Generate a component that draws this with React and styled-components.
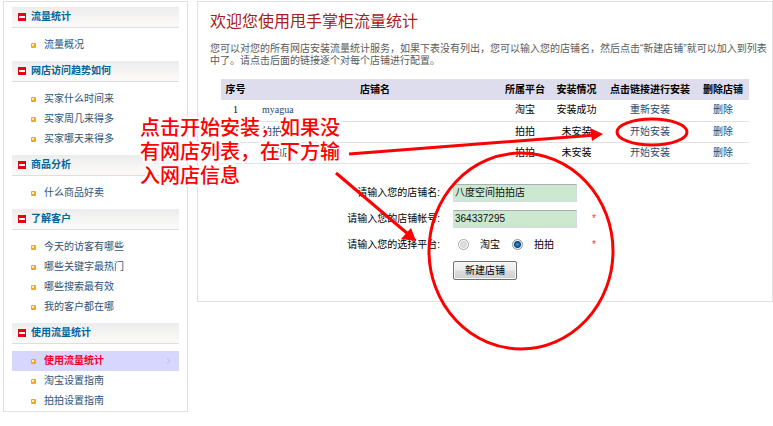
import React from 'react';
import styled, { createGlobalStyle } from 'styled-components';

const GlobalStyle = createGlobalStyle`
  * { box-sizing: border-box; }
  body {
    margin: 0;
    background: #fff;
    color: #000;
    font: 10px/20px "Liberation Sans", "Noto Sans CJK SC", sans-serif;
  }
  a { color: #1c4a73; text-decoration: none; }
  a:hover { text-decoration: underline; }
`;

const Page = styled.div`
  position: relative;
  display: flex;
  align-items: flex-start;
  gap: 9px;
  padding: 1px 0 15px 3px;
`;

const Sidebar = styled.nav`
  flex: 0 0 185px;
  padding: 5px 8px 0;
  border: 1px solid #e0e0e0;
`;

const SectionTitle = styled.h2`
  display: flex;
  align-items: center;
  gap: 4px;
  height: 21px;
  margin: 0;
  padding-left: 5px;
  border-bottom: 1px solid #dcdfe2;
  background: linear-gradient(#ececec, #faf9f8 80%);
  color: #03659b;
  font-size: 10px;
  font-weight: 700;
`;

const MenuList = styled.ul`
  margin: 0;
  padding: 7px 0 ${(p) => (p.$last ? 0 : 6)}px;
  list-style: none;
`;

const MenuItem = styled.li`
  display: flex;
  align-items: center;
  gap: 8px;
  height: 20px;
  padding: 0 8px 0 19px;
  background: ${(p) => (p.$active ? '#d6d6ff' : 'transparent')};
`;

const MenuLink = styled.a`
  flex: 1;
  && {
    color: ${(p) => (p.$active ? '#f5002a' : '#2c5478')};
  }
  font-weight: ${(p) => (p.$active ? 700 : 400)};
`;

const Main = styled.main`
  flex: 1;
  min-width: 0;
  padding: 8px 12px 17px;
  border: 1px solid #e0e0e0;
`;

const Title = styled.h1`
  margin: 0;
  color: #a81c22;
  font-size: 16px;
  font-weight: 400;
  line-height: 24px;
`;

const Intro = styled.p`
  margin: 9px -8px 0 0;
  color: #5a5a5a;
  line-height: 12px;
`;

const Content = styled.div`
  margin: 12px 11px 0;
`;

const ShopTable = styled.table`
  width: 100%;
  table-layout: fixed;
  border-collapse: collapse;
`;

const HeadCell = styled.th`
  width: ${(p) => p.$width || 'auto'};
  height: 21px;
  padding: 0;
  background: #dedded;
  font-weight: 700;
  white-space: nowrap;
`;

const Cell = styled.td`
  height: 21px;
  padding: 0 0 0 ${(p) => (p.$name ? 12 : 0)}px;
  border-bottom: 1px solid #e2e2e2;
  text-align: ${(p) => (p.$name ? 'left' : 'center')};
  font-family: "Liberation Serif", "Noto Sans CJK SC", serif;
`;

const Form = styled.form`
  display: grid;
  grid-template-columns: 219px 124px auto;
  grid-auto-rows: 26px;
  align-items: center;
  column-gap: 13px;
  margin-top: 16px;
`;

const Label = styled.label`
  grid-column: 1;
  text-align: right;
`;

const GroupLabel = styled.span`
  grid-column: 1;
  text-align: right;
`;

const TextInput = styled.input`
  width: 100%;
  height: 18px;
  padding: 0 1px;
  border: 1px solid #d5dbe3;
  border-top-color: #a9adb5;
  background: #cce8cf;
  color: #111;
  font: inherit;
`;

const Required = styled.span`
  color: #f33;
  padding-left: 2px;
`;

const Choices = styled.div`
  display: flex;
  gap: 12px;
  padding-left: 5px;
`;

const Choice = styled.label`
  display: flex;
  align-items: center;
  gap: 11px;
`;

const Radio = styled.input`
  appearance: none;
  width: 11px;
  height: 11px;
  margin: 0;
  border: 1px solid #a2a6aa;
  border-radius: 50%;
  background: radial-gradient(#e4e4e4, #d4d6d8 3px, #fff 4px);
  &:checked {
    border-color: #8796a5;
    background: radial-gradient(#3aa0dc 0, #0d3f77 3px, #e8eef4 4px);
  }
`;

const SubmitButton = styled.button`
  grid-column: 2;
  justify-self: start;
  width: 64px;
  height: 19px;
  padding: 0;
  border: 1px solid #707070;
  border-radius: 2px;
  background: linear-gradient(#f4f4f4, #ebebeb 49%, #dcdcdc 51%, #cfcfcf);
  box-shadow: inset 0 0 0 1px #f8f8f8;
  color: #000;
  font: inherit;
  line-height: 16px;
`;

const Marks = styled.svg`
  position: absolute;
  top: 0;
  left: 0;
  width: 773px;
  height: 426px;
  pointer-events: none;
`;

const Note = styled.p`
  position: absolute;
  top: 115px;
  left: 140px;
  width: 204px;
  margin: 0;
  color: #f00;
  font: 500 20px/24px "Noto Sans CJK SC", sans-serif;
  -webkit-text-stroke: 4px #fff;
  paint-order: stroke fill;
  pointer-events: none;
`;

const CollapseIcon = () => (
  <svg width="10" height="10" viewBox="0 0 10 10" aria-hidden="true">
    <rect x="1" y="1" width="8" height="8" fill="#e8000e" />
    <rect x="2" y="4" width="6" height="2" fill="#fff" />
  </svg>
);

const BulletIcon = () => (
  <svg width="5" height="5" viewBox="0 0 5 5" aria-hidden="true">
    <rect width="5" height="5" rx="1" fill="#f5a623" />
    <rect x="1" y="1" width="2" height="2" fill="#fff0c4" />
  </svg>
);

const ChevronIcon = () => (
  <svg width="5" height="6" viewBox="0 0 5 6" aria-hidden="true">
    <path d="M1 0.5 4 3 1 5.5" fill="none" stroke="#bfc0d4" />
  </svg>
);

const sections = [
  { title: '流量统计', items: ['流量概况'] },
  { title: '网店访问趋势如何', items: ['买家什么时间来', '买家周几来得多', '买家哪天来得多'] },
  { title: '商品分析', items: ['什么商品好卖'] },
  { title: '了解客户', items: ['今天的访客有哪些', '哪些关键字最热门', '哪些搜索最有效', '我的客户都在哪'] },
  { title: '使用流量统计', items: ['使用流量统计', '淘宝设置指南', '拍拍设置指南'], active: 0 },
];

const columns = [
  ['序号', '29px'],
  ['店铺名'],
  ['所属平台', '50px'],
  ['安装情况', '53px'],
  ['点击链接进行安装', '94px'],
  ['删除店铺', '52px'],
];

const shops = [
  { name: 'myagua', platform: '淘宝', status: '安装成功', action: '重新安装' },
  { name: '拍拍', platform: '拍拍', status: '未安装', action: '开始安装' },
  { name: '拍拍店', platform: '拍拍', status: '未安装', action: '开始安装' },
];

export default function App() {
  return (
    <>
      <GlobalStyle />
      <Page>
        <Sidebar>
          {sections.map((s, i) => (
            <React.Fragment key={s.title}>
              <SectionTitle><CollapseIcon />{s.title}</SectionTitle>
              <MenuList $last={i === sections.length - 1}>
                {s.items.map((item, j) => (
                  <MenuItem key={item} $active={s.active === j}>
                    <BulletIcon />
                    <MenuLink href="#" $active={s.active === j}>{item}</MenuLink>
                    {s.active === j && <ChevronIcon />}
                  </MenuItem>
                ))}
              </MenuList>
            </React.Fragment>
          ))}
        </Sidebar>
        <Main>
          <Title>欢迎您使用甩手掌柜流量统计</Title>
          <Intro>
            您可以对您的所有网店安装流量统计服务，如果下表没有列出，您可以输入您的店铺名，然后点击“新建店铺”就可以加入到列表中了。请点击后面的链接逐个对每个店铺进行配置。
          </Intro>
          <Content>
            <ShopTable>
              <thead>
                <tr>
                  {columns.map(([text, width]) => (
                    <HeadCell key={text} $width={width}>{text}</HeadCell>
                  ))}
                </tr>
              </thead>
              <tbody>
                {shops.map((shop, i) => (
                  <tr key={shop.name}>
                    <Cell>{i + 1}</Cell>
                    <Cell $name><a href="#">{shop.name}</a></Cell>
                    <Cell>{shop.platform}</Cell>
                    <Cell>{shop.status}</Cell>
                    <Cell><a href="#">{shop.action}</a></Cell>
                    <Cell><a href="#">删除</a></Cell>
                  </tr>
                ))}
              </tbody>
            </ShopTable>
            <Form onSubmit={(e) => e.preventDefault()}>
              <Label htmlFor="shop-name">请输入您的店铺名:</Label>
              <TextInput id="shop-name" defaultValue="八度空间拍拍店" />
              <span />
              <Label htmlFor="shop-account">请输入您的店铺帐号:</Label>
              <TextInput id="shop-account" defaultValue="364337295" />
              <Required>*</Required>
              <GroupLabel id="platform-label">请输入您的选择平台:</GroupLabel>
              <Choices role="radiogroup" aria-labelledby="platform-label">
                <Choice><Radio type="radio" name="platform" />淘宝</Choice>
                <Choice><Radio type="radio" name="platform" defaultChecked />拍拍</Choice>
              </Choices>
              <Required>*</Required>
              <SubmitButton type="submit">新建店铺</SubmitButton>
            </Form>
          </Content>
        </Main>
        <Note>点击开始安装，如果没有网店列表，在下方输入网店信息</Note>
        <Marks viewBox="0 0 773 426" aria-hidden="true">
          <g fill="none" stroke="#f00" strokeWidth="3">
            <ellipse cx="652" cy="132" rx="35" ry="13" />
            <ellipse cx="521" cy="251" rx="92" ry="98" />
            <path d="M349 154 596 135M336 173 408 234" />
          </g>
          <path d="M590 128 603 134 592 141ZM411 228 416 241 401 239Z" fill="#f00" />
        </Marks>
      </Page>
    </>
  );
}
